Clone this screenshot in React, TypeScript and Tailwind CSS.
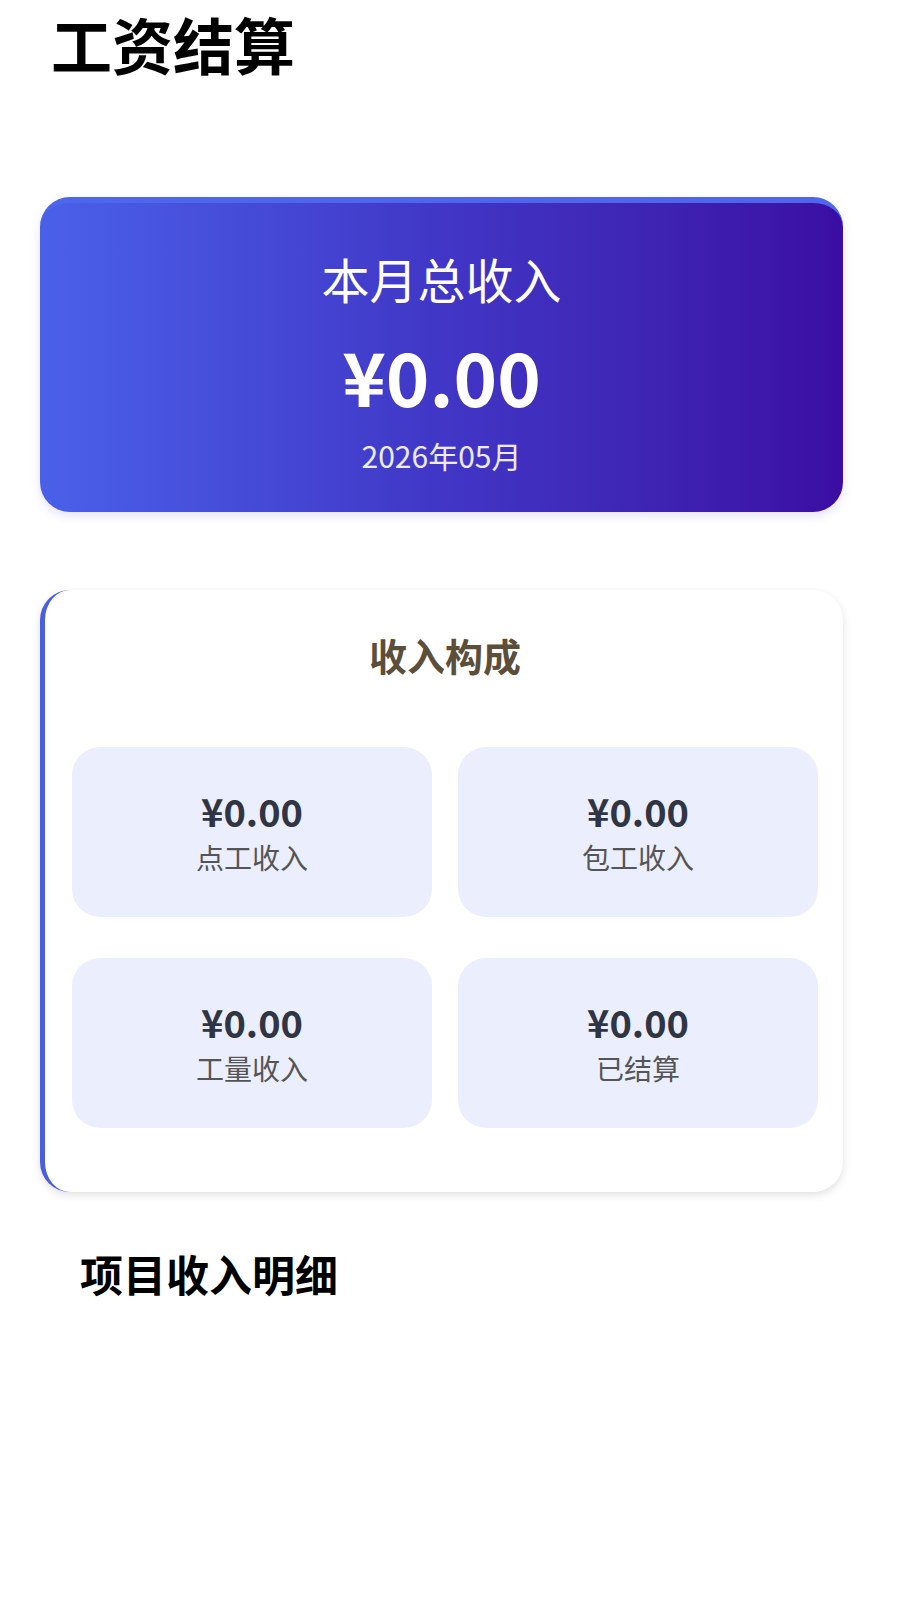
import React from "react";

const font = { fontFamily: '"Noto Sans CJK SC", "Noto Sans", sans-serif' };

const items = [
  { amount: "¥0.00", label: "点工收入" },
  { amount: "¥0.00", label: "包工收入" },
  { amount: "¥0.00", label: "工量收入" },
  { amount: "¥0.00", label: "已结算" },
];

export default function App() {
  return (
    <div className="w-[900px] min-h-[1600px] bg-white" style={font}>
      <h1 className="pl-[51px] text-[61px] leading-[88px] font-bold text-black">工资结算</h1>

      {/* 本月总收入 */}
      <div className="ml-[40px] mt-[109px] w-[803px] h-[315px] rounded-[30px] border-t-[6px] border-t-[#4d66ec] bg-linear-to-r from-[#4a60e9] via-[#4136c6] to-[#3b0da2] shadow-[0_4px_10px_rgba(80,60,200,0.15)] flex flex-col items-center pt-[45px] text-white">
        <div className="text-[48px] leading-[60px]">本月总收入</div>
        <div className="mt-[27px] text-[74px] leading-[80px] font-bold">¥0.00</div>
        <div className="mt-[22px] text-[30px] leading-[36px] text-white/90">2026年05月</div>
      </div>

      {/* 收入构成 */}
      <div className="ml-[40px] mt-[78px] w-[803px] h-[602px] rounded-[30px] border-l-[5px] border-l-[#4a5ee0] bg-white shadow-[0_3px_8px_rgba(0,0,0,0.12)] pt-[41px] pl-[27px] pr-[25px]">
        <h2 className="text-center text-[38px] leading-[48px] font-bold text-[#5b4f3b]">收入构成</h2>
        <div className="mt-[68px] grid grid-cols-2 gap-x-[26px] gap-y-[41px]">
          {items.map((it, idx) => (
            <div key={idx} className="h-[170px] rounded-[28px] bg-[#ebeefd] flex flex-col items-center justify-center">
              <div className="text-[38px] leading-[46px] font-bold text-[#2f3542]">{it.amount}</div>
              <div className="mt-[4px] text-[28px] leading-[38px] text-[#555555]">{it.label}</div>
            </div>
          ))}
        </div>
      </div>

      <h3 className="ml-[80px] mt-[53px] text-[43px] leading-[56px] font-bold text-black">项目收入明细</h3>
    </div>
  );
}
